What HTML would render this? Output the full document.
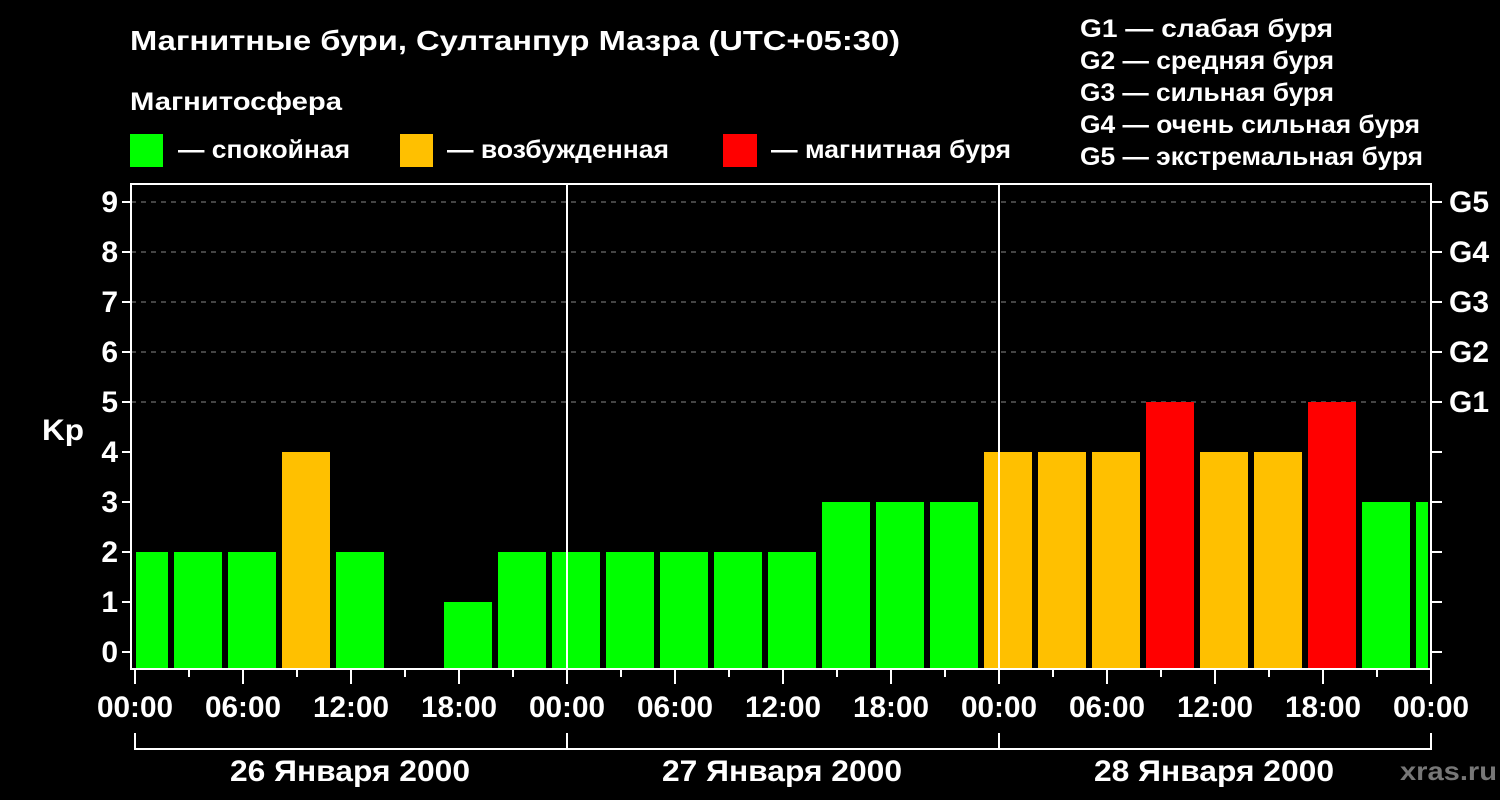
<!DOCTYPE html>
<html><head><meta charset="utf-8"><style>
html,body{margin:0;padding:0;background:#000;}
svg{display:block;}
text{font-family:"Liberation Sans",Arial,sans-serif;font-weight:bold;fill:#fff;}
</style></head><body>
<svg width="1500" height="800" viewBox="0 0 1500 800" xmlns="http://www.w3.org/2000/svg">
<rect width="1500" height="800" fill="#000"/>
<text x="130" y="50" font-size="28" textLength="770" lengthAdjust="spacingAndGlyphs">Магнитные бури, Султанпур Мазра (UTC+05:30)</text>
<text x="130" y="110" font-size="25" textLength="212" lengthAdjust="spacingAndGlyphs">Магнитосфера</text>
<rect x="130" y="134" width="33" height="33" fill="#00ff00"/>
<text x="178" y="158" font-size="25" textLength="172" lengthAdjust="spacingAndGlyphs">— спокойная</text>
<rect x="400" y="134" width="33" height="33" fill="#ffc000"/>
<text x="447" y="158" font-size="25" textLength="222" lengthAdjust="spacingAndGlyphs">— возбужденная</text>
<rect x="723" y="134" width="34" height="33" fill="#ff0000"/>
<text x="771" y="158" font-size="25" textLength="240" lengthAdjust="spacingAndGlyphs">— магнитная буря</text>
<g font-size="25">
<text x="1080" y="37" textLength="253" lengthAdjust="spacingAndGlyphs">G1 — слабая буря</text>
<text x="1080" y="69" textLength="254" lengthAdjust="spacingAndGlyphs">G2 — средняя буря</text>
<text x="1080" y="101" textLength="254" lengthAdjust="spacingAndGlyphs">G3 — сильная буря</text>
<text x="1080" y="133" textLength="340" lengthAdjust="spacingAndGlyphs">G4 — очень сильная буря</text>
<text x="1080" y="165" textLength="343" lengthAdjust="spacingAndGlyphs">G5 — экстремальная буря</text>
</g>
<g stroke="#888" stroke-width="1" stroke-dasharray="5,5">
<line x1="131" y1="202" x2="1431" y2="202"/><line x1="131" y1="252" x2="1431" y2="252"/>
<line x1="131" y1="302" x2="1431" y2="302"/><line x1="131" y1="352" x2="1431" y2="352"/>
<line x1="131" y1="402" x2="1431" y2="402"/>
</g>
<g>
<rect x="136" y="552" width="32" height="116" fill="#00ff00"/>
<rect x="174" y="552" width="48" height="116" fill="#00ff00"/>
<rect x="228" y="552" width="48" height="116" fill="#00ff00"/>
<rect x="282" y="452" width="48" height="216" fill="#ffc000"/>
<rect x="336" y="552" width="48" height="116" fill="#00ff00"/>
<rect x="444" y="602" width="48" height="66" fill="#00ff00"/>
<rect x="498" y="552" width="48" height="116" fill="#00ff00"/>
<rect x="552" y="552" width="48" height="116" fill="#00ff00"/>
<rect x="606" y="552" width="48" height="116" fill="#00ff00"/>
<rect x="660" y="552" width="48" height="116" fill="#00ff00"/>
<rect x="714" y="552" width="48" height="116" fill="#00ff00"/>
<rect x="768" y="552" width="48" height="116" fill="#00ff00"/>
<rect x="822" y="502" width="48" height="166" fill="#00ff00"/>
<rect x="876" y="502" width="48" height="166" fill="#00ff00"/>
<rect x="930" y="502" width="48" height="166" fill="#00ff00"/>
<rect x="984" y="452" width="48" height="216" fill="#ffc000"/>
<rect x="1038" y="452" width="48" height="216" fill="#ffc000"/>
<rect x="1092" y="452" width="48" height="216" fill="#ffc000"/>
<rect x="1146" y="402" width="48" height="266" fill="#ff0000"/>
<rect x="1200" y="452" width="48" height="216" fill="#ffc000"/>
<rect x="1254" y="452" width="48" height="216" fill="#ffc000"/>
<rect x="1308" y="402" width="48" height="266" fill="#ff0000"/>
<rect x="1362" y="502" width="48" height="166" fill="#00ff00"/>
<rect x="1416" y="502" width="12" height="166" fill="#00ff00"/>
</g>
<g stroke="#fff" stroke-width="2" fill="none">
<rect x="131" y="184" width="1300" height="485"/>
<line x1="567" y1="184" x2="567" y2="669"/>
<line x1="999" y1="184" x2="999" y2="669"/>
</g>
<g stroke="#fff" stroke-width="2">
<line x1="122" y1="202" x2="131" y2="202"/><line x1="122" y1="252" x2="131" y2="252"/>
<line x1="122" y1="302" x2="131" y2="302"/><line x1="122" y1="352" x2="131" y2="352"/>
<line x1="122" y1="402" x2="131" y2="402"/><line x1="122" y1="452" x2="131" y2="452"/>
<line x1="122" y1="502" x2="131" y2="502"/><line x1="122" y1="552" x2="131" y2="552"/>
<line x1="122" y1="602" x2="131" y2="602"/><line x1="122" y1="652" x2="131" y2="652"/>
<line x1="1431" y1="202" x2="1442" y2="202"/><line x1="1431" y1="252" x2="1442" y2="252"/>
<line x1="1431" y1="302" x2="1442" y2="302"/><line x1="1431" y1="352" x2="1442" y2="352"/>
<line x1="1431" y1="402" x2="1442" y2="402"/><line x1="1431" y1="452" x2="1442" y2="452"/>
<line x1="1431" y1="502" x2="1442" y2="502"/><line x1="1431" y1="552" x2="1442" y2="552"/>
<line x1="1431" y1="602" x2="1442" y2="602"/><line x1="1431" y1="652" x2="1442" y2="652"/>
</g>
<g stroke="#fff" stroke-width="2">
<line x1="135" y1="669" x2="135" y2="684"/><line x1="189" y1="669" x2="189" y2="677"/>
<line x1="243" y1="669" x2="243" y2="684"/><line x1="297" y1="669" x2="297" y2="677"/>
<line x1="351" y1="669" x2="351" y2="684"/><line x1="405" y1="669" x2="405" y2="677"/>
<line x1="459" y1="669" x2="459" y2="684"/><line x1="513" y1="669" x2="513" y2="677"/>
<line x1="567" y1="669" x2="567" y2="684"/><line x1="621" y1="669" x2="621" y2="677"/>
<line x1="675" y1="669" x2="675" y2="684"/><line x1="729" y1="669" x2="729" y2="677"/>
<line x1="783" y1="669" x2="783" y2="684"/><line x1="837" y1="669" x2="837" y2="677"/>
<line x1="891" y1="669" x2="891" y2="684"/><line x1="945" y1="669" x2="945" y2="677"/>
<line x1="999" y1="669" x2="999" y2="684"/><line x1="1053" y1="669" x2="1053" y2="677"/>
<line x1="1107" y1="669" x2="1107" y2="684"/><line x1="1161" y1="669" x2="1161" y2="677"/>
<line x1="1215" y1="669" x2="1215" y2="684"/><line x1="1269" y1="669" x2="1269" y2="677"/>
<line x1="1323" y1="669" x2="1323" y2="684"/><line x1="1377" y1="669" x2="1377" y2="677"/>
<line x1="1431" y1="669" x2="1431" y2="684"/>
<polyline fill="none" points="135,733 135,749 1431,749 1431,733"/>
<line x1="567" y1="733" x2="567" y2="749"/>
<line x1="999" y1="733" x2="999" y2="749"/>
</g>
<g font-size="30" text-anchor="end">
<text x="118" y="212">9</text><text x="118" y="262">8</text><text x="118" y="312">7</text>
<text x="118" y="362">6</text><text x="118" y="412">5</text><text x="118" y="462">4</text>
<text x="118" y="512">3</text><text x="118" y="562">2</text><text x="118" y="612">1</text>
<text x="118" y="662">0</text>
</g>
<text x="42" y="440" font-size="30" textLength="42" lengthAdjust="spacingAndGlyphs">Kp</text>
<g font-size="30">
<text x="1449" y="212">G5</text><text x="1449" y="262">G4</text><text x="1449" y="312">G3</text>
<text x="1449" y="362">G2</text><text x="1449" y="412">G1</text>
</g>
<g font-size="30" text-anchor="middle">
<text x="135" y="717" textLength="76" lengthAdjust="spacingAndGlyphs">00:00</text><text x="243" y="717" textLength="76" lengthAdjust="spacingAndGlyphs">06:00</text><text x="351" y="717" textLength="76" lengthAdjust="spacingAndGlyphs">12:00</text>
<text x="459" y="717" textLength="76" lengthAdjust="spacingAndGlyphs">18:00</text><text x="567" y="717" textLength="76" lengthAdjust="spacingAndGlyphs">00:00</text><text x="675" y="717" textLength="76" lengthAdjust="spacingAndGlyphs">06:00</text>
<text x="783" y="717" textLength="76" lengthAdjust="spacingAndGlyphs">12:00</text><text x="891" y="717" textLength="76" lengthAdjust="spacingAndGlyphs">18:00</text><text x="999" y="717" textLength="76" lengthAdjust="spacingAndGlyphs">00:00</text>
<text x="1107" y="717" textLength="76" lengthAdjust="spacingAndGlyphs">06:00</text><text x="1215" y="717" textLength="76" lengthAdjust="spacingAndGlyphs">12:00</text><text x="1323" y="717" textLength="76" lengthAdjust="spacingAndGlyphs">18:00</text>
<text x="1431" y="717" textLength="76" lengthAdjust="spacingAndGlyphs">00:00</text>
<text x="350" y="781" textLength="240" lengthAdjust="spacingAndGlyphs">26 Января 2000</text>
<text x="782" y="781" textLength="240" lengthAdjust="spacingAndGlyphs">27 Января 2000</text>
<text x="1214" y="781" textLength="240" lengthAdjust="spacingAndGlyphs">28 Января 2000</text>
</g>
<text x="1400" y="780" font-size="26" textLength="97" lengthAdjust="spacingAndGlyphs" style="fill:#777">xras.ru</text>
</svg>
</body></html>
